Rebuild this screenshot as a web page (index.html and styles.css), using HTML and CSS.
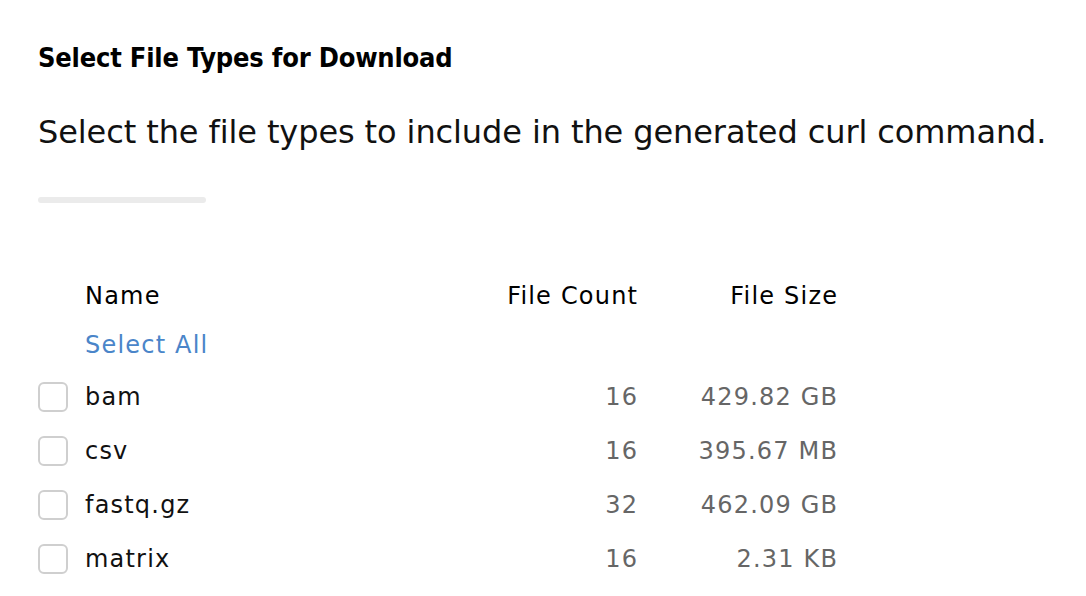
FILE: index.html
```html
<!DOCTYPE html>
<html lang="en">
<head>
<meta charset="utf-8">
<title>Select File Types</title>
<link rel="stylesheet" href="styles.css">
</head>
<body>
<main class="panel">
  <h2 class="title">Select File Types for Download</h2>
  <p class="lead">Select the file types to include in the generated curl command.</p>
  <div class="divider"></div>
  <div class="table">
    <div class="row head">
      <span class="cell check"></span>
      <span class="cell name">Name</span>
      <span class="cell num">File Count</span>
      <span class="cell num">File Size</span>
    </div>
    <div class="row select-row">
      <span class="cell check"></span>
      <a class="cell name link" href="#">Select All</a>
      <span class="cell num"></span>
      <span class="cell num"></span>
    </div>
    <div class="row data">
      <span class="cell check"><span class="box"></span></span>
      <span class="cell name">bam</span>
      <span class="cell num muted">16</span>
      <span class="cell num muted">429.82 GB</span>
    </div>
    <div class="row data">
      <span class="cell check"><span class="box"></span></span>
      <span class="cell name">csv</span>
      <span class="cell num muted">16</span>
      <span class="cell num muted">395.67 MB</span>
    </div>
    <div class="row data">
      <span class="cell check"><span class="box"></span></span>
      <span class="cell name">fastq.gz</span>
      <span class="cell num muted">32</span>
      <span class="cell num muted">462.09 GB</span>
    </div>
    <div class="row data">
      <span class="cell check"><span class="box"></span></span>
      <span class="cell name">matrix</span>
      <span class="cell num muted">16</span>
      <span class="cell num muted">2.31 KB</span>
    </div>
  </div>
</main>
</body>
</html>
```
FILE: styles.css
```css
html, body {
  margin: 0;
  padding: 0;
  background: #ffffff;
}
body {
  font-family: "DejaVu Sans", "Noto Sans", sans-serif;
  color: #111111;
}
.panel {
  padding: 40px 0 0 38px;
}
.title {
  margin: 0;
  font-family: "DejaVu Sans Condensed", "DejaVu Sans", sans-serif;
  font-weight: bold;
  font-size: 27px;
  line-height: 36px;
  letter-spacing: -0.2px;
  color: #000000;
}
.lead {
  margin: 36px 0 0 0;
  font-size: 32px;
  line-height: 40px;
  letter-spacing: -0.1px;
  color: #111111;
  white-space: nowrap;
}
.divider {
  margin-top: 45px;
  width: 168px;
  height: 6px;
  border-radius: 3px;
  background: #ebebeb;
}
.table {
  margin-top: 68px;
  display: flex;
  flex-direction: column;
  font-size: 24px;
  letter-spacing: 1.2px;
}
.row {
  display: grid;
  grid-template-columns: 47px 352px 200px 200px;
  align-items: center;
}
.head {
  height: 49px;
  color: #000000;
}
.select-row {
  height: 50px;
}
.data {
  height: 54px;
}
.cell.num {
  text-align: right;
  margin-right: -1.2px;
}
.muted {
  color: #666666;
}
.link {
  color: #4a85c9;
  text-decoration: none;
}
.box {
  display: block;
  box-sizing: border-box;
  width: 30px;
  height: 30px;
  border: 2px solid #cfcfcf;
  border-radius: 6px;
}
```
